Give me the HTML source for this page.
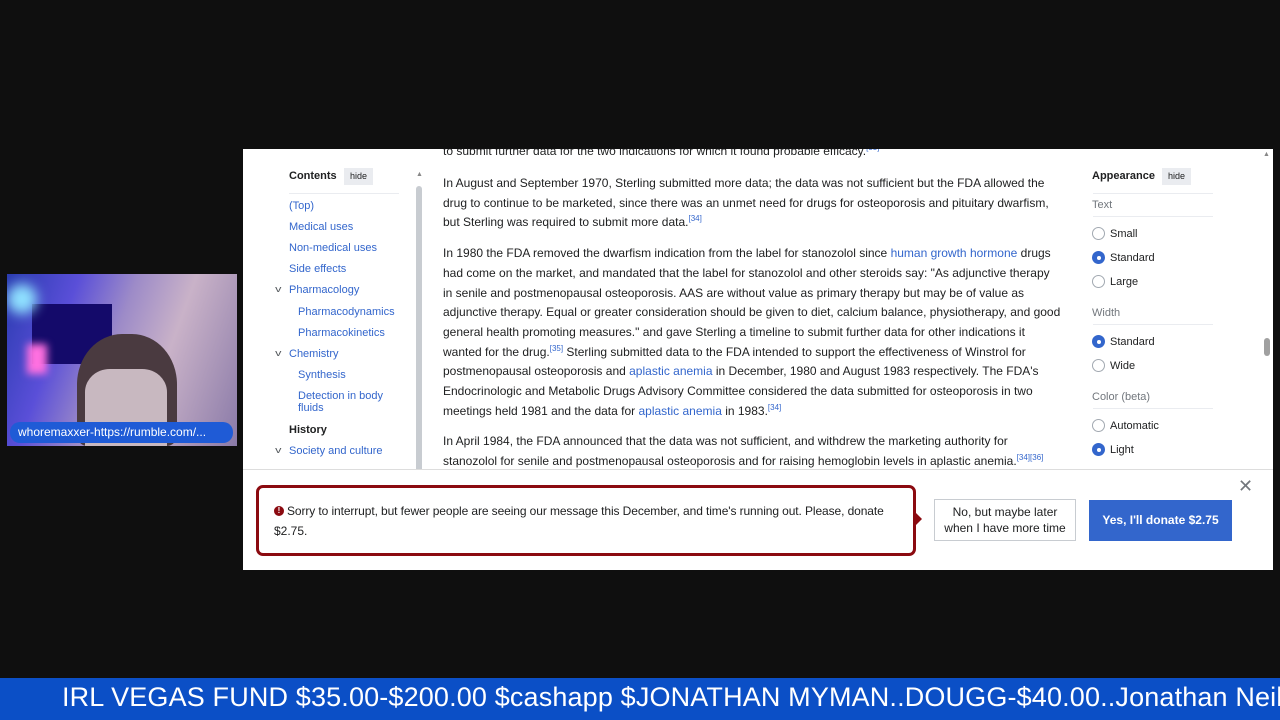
<!DOCTYPE html>
<html><head><meta charset="utf-8"><style>
body{margin:0;width:1280px;height:720px;background:#0f0f0f;position:relative;overflow:hidden;font-family:"Liberation Sans",Arial,sans-serif}
.win{position:absolute;left:243px;top:149px;width:1030px;height:421px;background:#fff;overflow:hidden}
.a{position:absolute;white-space:nowrap}
.toc a,.lnk{color:#3366cc}
.toc{font-size:11px;color:#3366cc}
.txt{position:absolute;left:200px;width:618px;font-size:12px;line-height:19.7px;color:#202122}
.txt p{margin:0 0 11px}
sup{font-size:8px;color:#3366cc;line-height:0}
.rad{position:absolute;width:11px;height:11px;border:1px solid #a2a9b1;border-radius:50%;background:#fff}
.rad.on{border:1px solid #3366cc;background:#3366cc}
.rad.on::after{content:"";position:absolute;left:3.5px;top:3.5px;width:4px;height:4px;border-radius:50%;background:#fff}
.ap{font-size:11px;color:#202122}
.lab{font-size:11px;color:#72777d}
.hr{position:absolute;height:1px;background:#eaecf0}
.chev{position:absolute;font-size:9px;color:#54595d;transform:scaleX(1.4)}
</style></head><body>
<div style="position:absolute;left:7px;top:274px;width:230px;height:172px;background:linear-gradient(110deg,#2a3bb0 0%,#5a4fd8 25%,#9d8bc8 45%,#c9b2c8 65%,#8a7aa8 100%);overflow:hidden">
<div style="position:absolute;left:25px;top:30px;width:80px;height:60px;background:#140a6a"></div>
<div style="position:absolute;left:0;top:10px;width:30px;height:30px;border-radius:50%;background:#8fe0ff;filter:blur(6px)"></div>
<div style="position:absolute;left:70px;top:60px;width:100px;height:112px;border-radius:45% 45% 10% 10%;background:#4a3a40"></div>
<div style="position:absolute;left:78px;top:95px;width:82px;height:77px;background:#c8b8c0;border-radius:30% 30% 0 0"></div>
<div style="position:absolute;left:20px;top:70px;width:20px;height:30px;background:#ff70e0;filter:blur(4px)"></div>
</div>
<div style="position:absolute;left:10px;top:422px;width:223px;height:21px;background:#1f5bd6;border-radius:10px;color:#fff;font-size:12px;line-height:21px;padding-left:8px;box-sizing:border-box;white-space:nowrap">whoremaxxer-https://rumble.com/...</div>

<div class="win">
<div class="a" style="left:200px;top:-5px;font-size:12px;color:#202122">to submit further data for the two indications for which it found probable efficacy.<sup>[33]</sup></div>
<div class="a" style="left:46px;top:21px;font-size:11px;font-weight:bold;color:#202122">Contents</div>
<div class="a" style="left:101px;top:19px;width:29px;height:17px;background:#eaecf0;font-size:9px;line-height:17px;text-align:center;color:#202122">hide</div>
<div class="hr" style="left:46px;top:44px;width:110px"></div>
<div class="toc">
<div class="a" style="left:46px;top:51px">(Top)</div>
<div class="a" style="left:46px;top:72px">Medical uses</div>
<div class="a" style="left:46px;top:93px">Non-medical uses</div>
<div class="a" style="left:46px;top:114px">Side effects</div>
<div class="chev" style="left:33px;top:135px">v</div>
<div class="a" style="left:46px;top:135px">Pharmacology</div>
<div class="a" style="left:55px;top:157px">Pharmacodynamics</div>
<div class="a" style="left:55px;top:178px">Pharmacokinetics</div>
<div class="chev" style="left:33px;top:199px">v</div>
<div class="a" style="left:46px;top:199px">Chemistry</div>
<div class="a" style="left:55px;top:220px">Synthesis</div>
<div class="a" style="left:55px;top:241px;line-height:12px">Detection in body<br>fluids</div>
<div class="a" style="left:46px;top:275px;color:#202122;font-weight:bold">History</div>
<div class="chev" style="left:33px;top:296px">v</div>
<div class="a" style="left:46px;top:296px">Society and culture</div>
</div>
<div class="a" style="left:173px;top:37px;width:6px;height:290px;background:#c8ccd1;border-radius:3px"></div>
<div class="a" style="left:173px;top:22px;font-size:7px;color:#888">▲</div>
<div class="txt" style="top:25px">
<p>In August and September 1970, Sterling submitted more data; the data was not sufficient but the FDA allowed the drug to continue to be marketed, since there was an unmet need for drugs for osteoporosis and pituitary dwarfism, but Sterling was required to submit more data.<sup>[34]</sup></p>
<p>In 1980 the FDA removed the dwarfism indication from the label for stanozolol since <span class="lnk">human growth hormone</span> drugs had come on the market, and mandated that the label for stanozolol and other steroids say: "As adjunctive therapy in senile and postmenopausal osteoporosis. AAS are without value as primary therapy but may be of value as adjunctive therapy. Equal or greater consideration should be given to diet, calcium balance, physiotherapy, and good general health promoting measures." and gave Sterling a timeline to submit further data for other indications it wanted for the drug.<sup>[35]</sup> Sterling submitted data to the FDA intended to support the effectiveness of Winstrol for postmenopausal osteoporosis and <span class="lnk">aplastic anemia</span> in December, 1980 and August 1983 respectively. The FDA's Endocrinologic and Metabolic Drugs Advisory Committee considered the data submitted for osteoporosis in two meetings held 1981 and the data for <span class="lnk">aplastic anemia</span> in 1983.<sup>[34]</sup></p>
<p>In April 1984, the FDA announced that the data was not sufficient, and withdrew the marketing authority for stanozolol for senile and postmenopausal osteoporosis and for raising hemoglobin levels in aplastic anemia.<sup>[34][36]</sup></p>
</div>
<div class="a" style="left:849px;top:21px;font-size:11px;font-weight:bold;color:#202122">Appearance</div>
<div class="a" style="left:919px;top:19px;width:29px;height:17px;background:#eaecf0;font-size:9px;line-height:17px;text-align:center;color:#202122">hide</div>
<div class="hr" style="left:850px;top:44px;width:120px"></div>
<div class="a lab" style="left:849px;top:50px">Text</div>
<div class="hr" style="left:850px;top:67px;width:120px"></div>
<div class="rad" style="left:849px;top:78px"></div><div class="a ap" style="left:867px;top:79px">Small</div>
<div class="rad on" style="left:849px;top:102px"></div><div class="a ap" style="left:867px;top:103px">Standard</div>
<div class="rad" style="left:849px;top:126px"></div><div class="a ap" style="left:867px;top:127px">Large</div>
<div class="a lab" style="left:849px;top:158px">Width</div>
<div class="hr" style="left:850px;top:175px;width:120px"></div>
<div class="rad on" style="left:849px;top:186px"></div><div class="a ap" style="left:867px;top:187px">Standard</div>
<div class="rad" style="left:849px;top:210px"></div><div class="a ap" style="left:867px;top:211px">Wide</div>
<div class="a lab" style="left:849px;top:242px">Color (beta)</div>
<div class="hr" style="left:850px;top:259px;width:120px"></div>
<div class="rad" style="left:849px;top:270px"></div><div class="a ap" style="left:867px;top:271px">Automatic</div>
<div class="rad on" style="left:849px;top:294px"></div><div class="a ap" style="left:867px;top:295px">Light</div>
<div class="a" style="left:1021px;top:189px;width:6px;height:18px;background:#a0a0a0;border-radius:3px"></div>
<div class="a" style="left:1020px;top:2px;font-size:7px;color:#888">▲</div>
<div class="a" style="left:0;top:320px;width:1030px;height:101px;background:#fff;border-top:1px solid #ddd"></div>
<div class="a" style="left:13px;top:336px;width:660px;height:71px;border:3px solid #8b0a10;border-radius:7px;box-sizing:border-box"></div>
<div class="a" style="left:673px;top:364px;width:0;height:0;border-top:6px solid transparent;border-bottom:6px solid transparent;border-left:6px solid #8b0a10"></div>
<div class="a" style="left:31px;top:357px;width:10px;height:10px;border-radius:50%;background:#8b0a10;color:#fff;font-size:8px;line-height:10px;text-align:center;font-weight:bold">!</div>
<div class="a" style="left:44px;top:355px;font-size:12px;color:#202122;letter-spacing:-0.1px">Sorry to interrupt, but fewer people are seeing our message this December, and time's running out. Please, donate</div>
<div class="a" style="left:31px;top:375px;font-size:12px;color:#202122">$2.75.</div>
<div class="a" style="left:691px;top:350px;width:142px;height:42px;border:1px solid #c8ccd1;box-sizing:border-box;font-size:12px;line-height:16px;text-align:center;padding-top:4px;color:#202122">No, but maybe later<br>when I have more time</div>
<div class="a" style="left:846px;top:351px;width:143px;height:41px;background:#3366cc;color:#fff;font-size:12px;font-weight:bold;line-height:41px;text-align:center">Yes, I'll donate $2.75</div>
<div class="a" style="left:995px;top:327px;font-size:18px;color:#72777d">✕</div>
</div>
<div style="position:absolute;left:0;top:678px;width:1280px;height:42px;background:#0b4fc6"></div>
<div class="a" style="left:62px;top:682px;font-size:27px;color:#fff;letter-spacing:0.15px">IRL VEGAS FUND $35.00-$200.00 $cashapp $JONATHAN MYMAN..DOUGG-$40.00..Jonathan Neil</div>
</body></html>
